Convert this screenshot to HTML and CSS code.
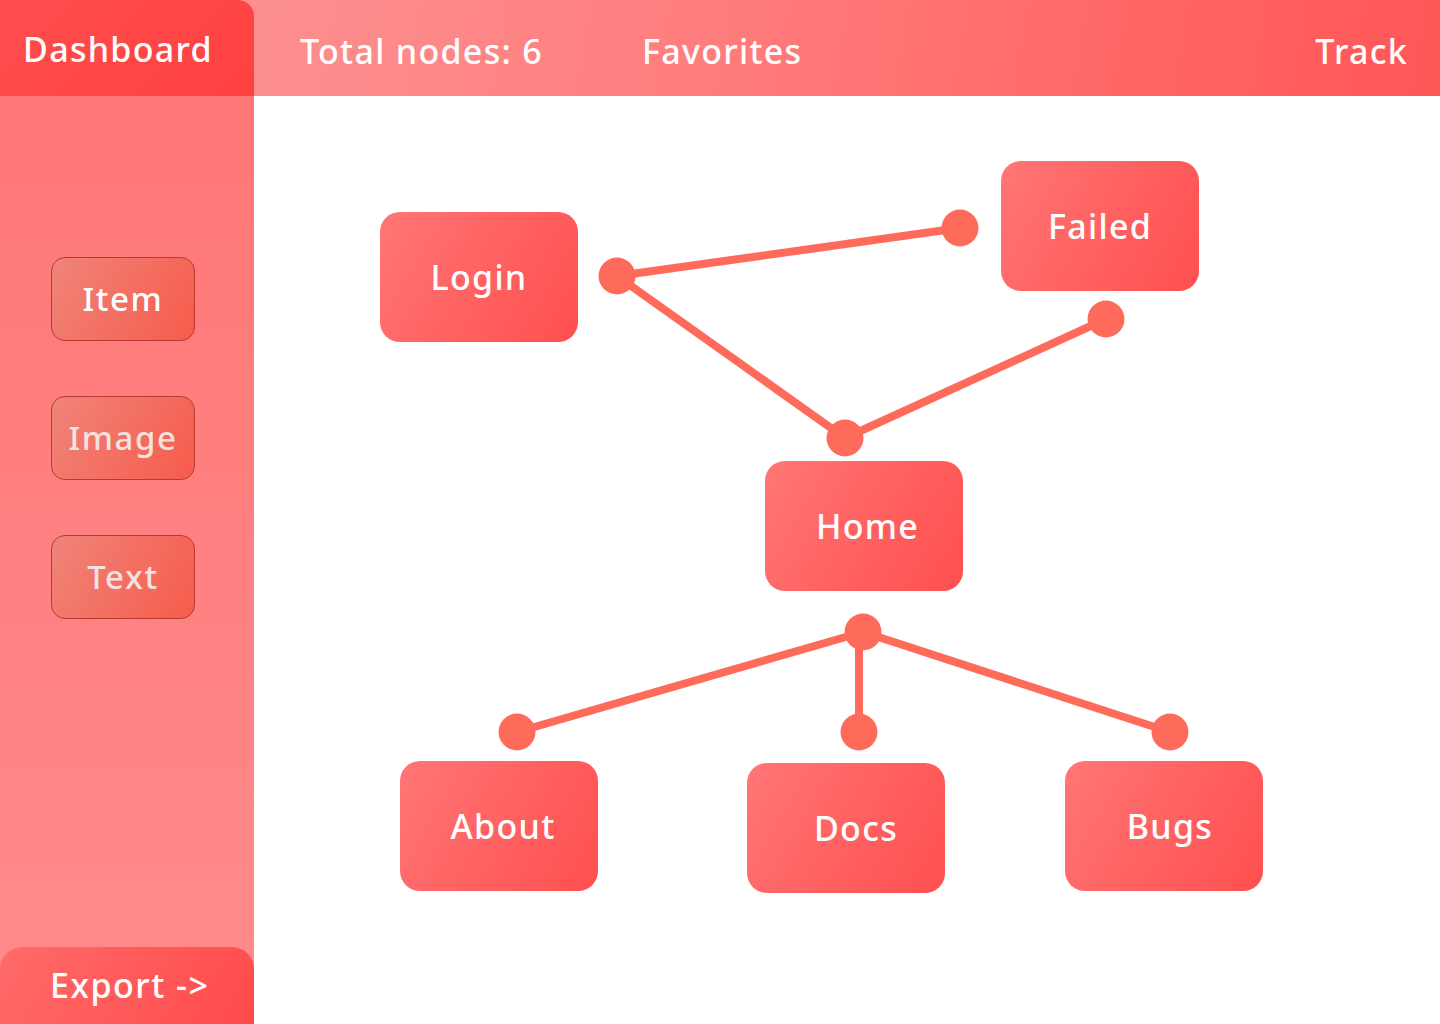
FILE: index.html
```html
<!DOCTYPE html>
<html lang="en">
<head>
  <meta charset="UTF-8" />
  <meta name="viewport" content="width=device-width, initial-scale=1.0"/>
  <title>Dashboard</title>
  <link rel="stylesheet" href="styles.css">
</head>
<body>
  <header class="topbar">
    <div class="brand">Dashboard</div>
    <nav class="top-nav">
      <span class="nav-item">Total nodes: 6</span>
      <span class="nav-item">Favorites</span>
      <span class="nav-item track">Track</span>
    </nav>
  </header>

  <div class="workspace">
    <aside class="sidebar">
      <div class="tools">
        <button class="tool">Item</button>
        <button class="tool dim">Image</button>
        <button class="tool dim">Text</button>
      </div>
      <button class="export">Export -&gt;</button>
    </aside>

    <main class="canvas">
      <!-- edges + connector dots -->
      <svg class="edges" width="1186" height="928" viewBox="0 0 1186 928">
        <g class="lines">
          <line x1="363" y1="180" x2="706" y2="132" />
          <line x1="363" y1="180" x2="591" y2="342" />
          <line x1="591" y1="342" x2="852" y2="223" />
          <line x1="609" y1="536" x2="263" y2="636" />
          <line x1="605" y1="536" x2="605" y2="636" />
          <line x1="609" y1="536" x2="916" y2="636" />
        </g>
        <g class="dots">
          <circle cx="363" cy="180" r="18.5" />
          <circle cx="706" cy="132" r="18.5" />
          <circle cx="852" cy="223" r="18.5" />
          <circle cx="591" cy="342" r="18.5" />
          <circle cx="609" cy="536" r="18.5" />
          <circle cx="263" cy="636" r="18.5" />
          <circle cx="605" cy="636" r="18.5" />
          <circle cx="916" cy="636" r="18.5" />
        </g>
      </svg>

      <div class="node" style="left: 126px; top: 116px;">Login</div>
      <div class="node" style="left: 747px; top: 65px;">Failed</div>
      <div class="node" style="left: 511px; top: 365px; padding-left: 7px;">Home</div>
      <div class="node" style="left: 146px; top: 665px; padding-left: 8px;">About</div>
      <div class="node" style="left: 493px; top: 667px; padding-left: 20px;">Docs</div>
      <div class="node" style="left: 811px; top: 665px; padding-left: 12px;">Bugs</div>
    </main>
  </div>
</body>
</html>
```

FILE: styles.css
```css
* {
  box-sizing: border-box;
}

body {
  margin: 0;
  width: 1440px;
  height: 1024px;
  overflow: hidden;
  font-family: 'Noto Sans', sans-serif;
  font-weight: 500;
  letter-spacing: 1.3px;
  color: white;
  background-color: white;
}

.topbar {
  display: flex;
  height: 96px;
  background: linear-gradient(100deg, #fb9898 0%, #ff8080 45%, #ff5656 100%);
}

.brand {
  width: 254px;
  height: 96px;
  display: flex;
  align-items: center;
  padding: 2px 0 0 23px;
  font-size: 34px;
  background: linear-gradient(135deg, #ff4e4e, #ff4040);
  border-top-right-radius: 16px;
}

.top-nav {
  flex: 1;
  display: flex;
  align-items: center;
  gap: 99px;
  padding: 6px 32px 0 46px;
}

.nav-item {
  font-size: 34px;
}

.track {
  margin-left: auto;
}

.workspace {
  display: flex;
  height: 928px;
}

.sidebar {
  width: 254px;
  display: flex;
  flex-direction: column;
  justify-content: space-between;
  background: linear-gradient(180deg, #ff7777 0%, #ff8b8b 100%);
}

.tools {
  display: flex;
  flex-direction: column;
  gap: 55px;
  padding: 161px 0 0 51px;
}

.tool {
  width: 144px;
  height: 84px;
  font-family: inherit;
  font-weight: 500;
  font-size: 33px;
  letter-spacing: 1.6px;
  color: #fff;
  background: linear-gradient(120deg, #ef8479 0%, #f46c5e 60%, #f65b4b 100%);
  border: 1px solid #b83a32;
  border-radius: 14px;
  padding: 0 0 2px;
  cursor: pointer;
}

.tool.dim {
  color: #f2e2e0;
}

.export {
  width: 254px;
  height: 80px;
  margin-bottom: -3px;
  font-family: inherit;
  font-weight: 500;
  font-size: 34px;
  letter-spacing: 1.5px;
  color: #fff;
  text-align: left;
  padding: 0 0 4px 50px;
  border: none;
  border-radius: 22px 22px 0 0;
  background: linear-gradient(120deg, #ff6b6b 0%, #ff4a4a 100%);
  cursor: pointer;
}

.canvas {
  position: relative;
  flex: 1;
}

.edges {
  position: absolute;
  left: 0;
  top: 0;
}

.lines line {
  stroke: #ff6b5a;
  stroke-width: 8;
}

.dots circle {
  fill: #ff6b5a;
}

.node {
  position: absolute;
  width: 198px;
  height: 130px;
  display: flex;
  align-items: center;
  justify-content: center;
  font-size: 34px;
  border-radius: 20px;
  background: linear-gradient(120deg, #ff7676 0%, #ff6262 50%, #ff4f4f 100%);
}
```
